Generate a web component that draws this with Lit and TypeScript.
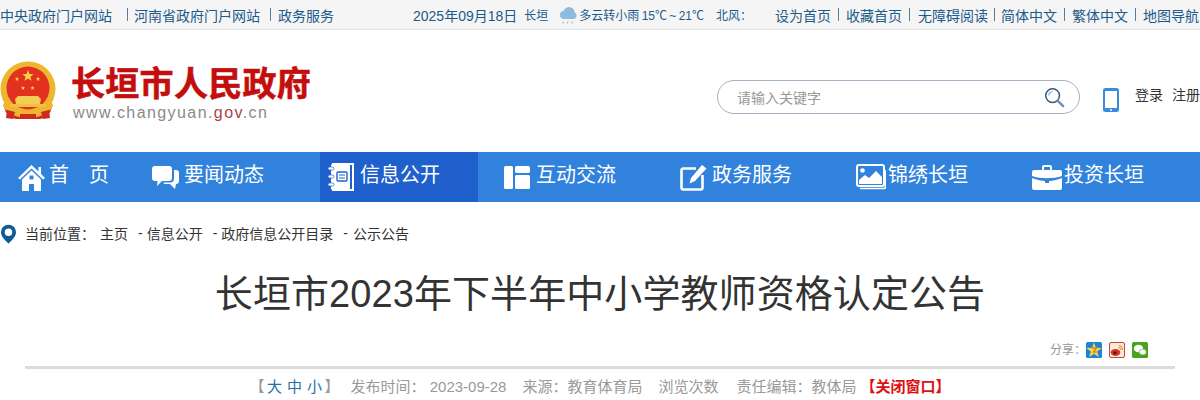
import { LitElement, html, css, svg } from "lit";
import { customElement } from "lit/decorators.js";

const star = (cx: number, cy: number, r: number, fill = "#f7d24a") => {
  const pts: string[] = [];
  for (let i = 0; i < 10; i++) {
    const a = -Math.PI / 2 + (i * Math.PI) / 5;
    const q = i % 2 ? r * 0.42 : r;
    pts.push(`${(cx + q * Math.cos(a)).toFixed(2)},${(cy + q * Math.sin(a)).toFixed(2)}`);
  }
  return svg`<polygon points=${pts.join(" ")} fill=${fill}></polygon>`;
};

@customElement("app-root")
export class AppRoot extends LitElement {
  static styles = css`
    :host {
      display: block;
      width: 1200px;
      height: 400px;
      overflow: hidden;
      background: #fff;
      font-family: "Liberation Sans", "Noto Sans CJK SC", sans-serif;
      color: #333;
    }
    svg { display: block; flex: none; }
    .top {
      height: 29px;
      background: #f5f5f5;
      border-bottom: 1px solid #e2e2e2;
      display: flex;
      align-items: center;
      font-size: 14px;
      color: #1c5a8a;
      white-space: nowrap;
      box-sizing: content-box;
    }
    .top .a { flex: none; }
    .sep { flex: none; width: 1px; height: 13px; background: #4f7fa6; }
    .s1 { margin-left: 15px; }
    .a2 { margin-left: 6px; }
    .s2 { margin-left: 10px; }
    .a3 { margin-left: 7px; }
    .date { margin-left: 79px; }
    .city { margin-left: 7px; font-size: 12px; }
    .cloud { margin-left: 11px; }
    .wx { margin-left: 2px; font-size: 12px; word-spacing: -1px; }
    .wind { margin-left: 12px; font-size: 12px; width: 59px; }
    .r { display: flex; align-items: center; }
    .r .sep { margin: 0 7px; }
    .r .sep.b { margin: 0 8px 0 7px; }
    .r .sep.c { margin: 0 6px; }

    .head { height: 122px; position: relative; display: flex; align-items: flex-start; }
    .logo { display: flex; margin-top: 30px; }
    .names { margin-left: 17px; }
    .cn {
      font-size: 34px;
      line-height: 38px;
      margin-top: 5px;
      margin-left: -2px;
      letter-spacing: 0.3px;
      font-weight: 700;
      color: #c40d0d;
      -webkit-text-stroke: 0.6px #c40d0d;
      white-space: nowrap;
    }
    .en {
      font-size: 16px;
      line-height: 20px;
      letter-spacing: 1.42px;
      color: #8a8a8a;
      white-space: nowrap;
    }
    .en b { font-weight: 400; color: #a8444a; }
    .search {
      position: absolute;
      left: 717px;
      top: 50px;
      width: 328px;
      height: 32px;
      border: 1px solid #a3b3c4;
      border-radius: 17px;
      display: flex;
      align-items: center;
      padding: 0 14px 0 19px;
      justify-content: space-between;
      font-size: 14px;
      color: #999;
      box-sizing: content-box;
    }
    .user {
      position: absolute;
      left: 1103px;
      top: 58px;
      display: flex;
      align-items: flex-start;
      font-size: 14px;
      color: #333;
      white-space: nowrap;
    }
    .user span { line-height: 16px; margin-top: -1px; }
    .user .login { margin-left: 16px; }
    .user .reg { margin-left: 9px; }

    nav {
      height: 50px;
      background: #3182dc;
      display: flex;
      padding-left: 10px;
      color: #fff;
      font-size: 20px;
    }
    .item {
      width: 158px;
      margin-right: 18px;
      padding-left: 8px;
      box-sizing: border-box;
      display: flex;
      align-items: center;
      white-space: nowrap;
      flex: none;
    }
    .item.first { width: 116px; }
    .item.on { background: #2060cc; }
    .item span { display: block; margin-top: -4px; line-height: 28px; }
    .gap4 { margin-left: 4px; }
    .gap5 { margin-left: 5px; }
    .gap6 { margin-left: 6px; }
    .gap2 { margin-left: 2px; }
    .home i { font-style: normal; margin-left: 20px; }

    .crumb {
      height: 64px;
      display: flex;
      align-items: center;
      font-size: 14px;
      color: #333;
      white-space: nowrap;
    }
    .crumb span { margin-top: -2px; }
    .pin { margin: 0 9px 0 1px; }
    .crumb .c1 { margin-left: 5px; }
    .crumb .dash { margin-left: 10px; margin-right: 4px; }
    .crumb .dash.last { margin-right: 5px; }

    h1 {
      margin: 0;
      font-weight: 400;
      font-size: 38px;
      line-height: 56px;
      height: 56px;
      letter-spacing: 0.08px;
      text-align: center;
      color: #333;
      white-space: nowrap;
    }
    .share {
      margin-top: 13px;
      height: 30px;
      padding-right: 52px;
      display: flex;
      justify-content: flex-end;
      align-items: center;
      font-size: 12px;
      color: #999;
    }
    .share span { margin-top: -3px; }
    .share .i { margin-left: 7px; }
    .share .i.first { margin-left: 0; }
    .rule { margin: 1px 25px 0; height: 3px; background: #dcdcdc; }
    .meta {
      display: flex;
      justify-content: center;
      margin-top: 8px;
      font-size: 15px;
      line-height: 20px;
      color: #999;
      white-space: nowrap;
    }
    .meta .blue { color: #2a6ea6; }
    .meta .sz b { font-weight: 400; margin: 0 2.5px; }
    .meta .g { margin-left: 16px; }
    .meta .g1 { margin-left: 11px; }
    .meta .g2 { margin-left: 18px; }
    .meta .close { color: #e01010; margin-left: 4px; font-weight: 700; }
  `;

  emblem() {
    return html`<svg width="56" height="60" viewBox="0 0 56 60">
      <path d="M6 41 C2 48 6 57 16 59 L40 59 C50 57 54 48 50 41 Z" fill="#c92a1c"></path>
      <circle cx="28" cy="29" r="27.5" fill="#eeb630"></circle>
      <circle cx="28" cy="28" r="21.5" fill="#e2321f"></circle>
      ${star(28, 16, 6)}${star(17, 19, 2.4)}${star(38, 19, 2.4)}${star(23, 28, 2.2)}${star(32.5, 28, 2.2)}
      <path d="M18 36 L38 36 L41 39 L40 44 L16 44 L15 39 Z" fill="#f4cd55"></path>
      <rect x="10" y="44" width="36" height="3" fill="#f0c040"></rect>
      <path d="M4 42 C10 52 20 53 28 53 C36 53 46 52 52 42 L53 46 C47 56 36 58 28 58 C20 58 9 56 3 46 Z" fill="#eeb630"></path>
      <path d="M7 50 L15 52 L13 59 L6 58 Z M49 50 L41 52 L43 59 L50 58 Z M20 54 H36 V59 H20 Z" fill="#cf2a1c"></path>
    </svg>`;
  }

  render() {
    return html`
      <div class="top">
        <span class="a">中央政府门户网站</span><i class="sep s1"></i>
        <span class="a a2">河南省政府门户网站</span><i class="sep s2"></i>
        <span class="a a3">政务服务</span>
        <span class="a date">2025年09月18日</span>
        <span class="a city">长垣</span>
        <svg class="cloud" width="18" height="20" viewBox="0 0 18 20">
          <circle cx="5" cy="10" r="4" fill="#8fbbe0"></circle>
          <circle cx="10" cy="7.5" r="5.5" fill="#8fbbe0"></circle>
          <circle cx="14" cy="10.5" r="3.5" fill="#8fbbe0"></circle>
          <rect x="4" y="10" width="11" height="4" fill="#8fbbe0"></rect>
          <path d="M4.5 16.5 l-.7 2 M9 16.5 l-.7 2 M13.5 16.5 l-.7 2" stroke="#9ab" stroke-width="1"></path>
        </svg>
        <span class="a wx">多云转小雨 15℃ ~ 21℃</span>
        <span class="a wind">北风：</span>
        <div class="r">
          <span>设为首页</span><i class="sep"></i>
          <span>收藏首页</span><i class="sep b"></i>
          <span>无障碍阅读</span><i class="sep c"></i>
          <span>简体中文</span><i class="sep"></i>
          <span>繁体中文</span><i class="sep"></i>
          <span>地图导航</span>
        </div>
      </div>

      <div class="head">
        <div class="logo">
          ${this.emblem()}
          <div class="names">
            <div class="cn">长垣市人民政府</div>
            <div class="en">www.changyuan.<b>gov</b>.cn</div>
          </div>
        </div>
        <div class="search">
          <span>请输入关键字</span>
          <svg width="21" height="21" viewBox="0 0 22 22">
            <circle cx="9" cy="9" r="7.2" fill="none" stroke="#3c5a78" stroke-width="1.6"></circle>
            <path d="M5 9 a4 4 0 0 1 4 -4" fill="none" stroke="#7ea6cc" stroke-width="1.2"></path>
            <path d="M14.5 14.5 L20 20" stroke="#6f93b5" stroke-width="2.6" stroke-linecap="round"></path>
          </svg>
        </div>
        <div class="user">
          <svg width="16" height="24" viewBox="0 0 16 24">
            <rect width="16" height="24" rx="2.5" fill="#3a8ae0"></rect>
            <rect x="2" y="3" width="12" height="17" fill="#fff"></rect>
            <circle cx="8" cy="22" r="1" fill="#fff"></circle>
          </svg>
          <span class="login">登录</span><span class="reg">注册</span>
        </div>
      </div>

      <nav>
        <div class="item first">
          <svg width="27" height="27" viewBox="0 0 27 27">
            <path fill="#fff" d="M13.5 1 L0 14 L2 15.5 L13.5 4.5 L25 15.5 L27 14 L23 10 V3 H20.5 V7.5 Z"></path>
            <path fill="#fff" fill-rule="evenodd" d="M13.5 6.5 L4 15.5 V27 H11 V20 H16 V27 H23 V15.5 Z M11.5 11.5 H15.5 V15.5 H11.5 Z"></path>
          </svg>
          <span class="home gap4">首<i>页</i></span>
        </div>
        <div class="item">
          <svg width="27" height="24" viewBox="0 0 27 24">
            <path fill="#fff" d="M3 1 H17 A3 3 0 0 1 20 4 V13 A3 3 0 0 1 17 16 H10 L5 21 L5.5 16 H3 A3 3 0 0 1 0 13 V4 A3 3 0 0 1 3 1 Z"></path>
            <path fill="#fff" d="M22 5 H24 A3 3 0 0 1 27 8 V16 A3 3 0 0 1 24 19 L23 24 L18 19 H12 L11.5 17.5 H18 A4 4 0 0 0 22 13.5 Z"></path>
          </svg>
          <span class="gap5">要闻动态</span>
        </div>
        <div class="item on">
          <svg width="26" height="28" viewBox="0 0 26 28">
            <path fill="#fff" fill-rule="evenodd" d="M4 0 H26 V28 H4 V24 H6 V26 H24 V2 H6 V4 H4 Z"></path>
            <rect x="3" y="1.5" width="19" height="25" fill="#fff"></rect>
            <rect x="9" y="9" width="10" height="9" rx="1" fill="none" stroke="#2060cc" stroke-width="1.4"></rect>
            <path d="M11 12 H17 M11 15 H17" stroke="#2060cc" stroke-width="1.2"></path>
            <rect x="0" y="4" width="6" height="3" rx="1.5" fill="#fff" stroke="#2060cc" stroke-width=".7"></rect>
            <rect x="0" y="12" width="6" height="3" rx="1.5" fill="#fff" stroke="#2060cc" stroke-width=".7"></rect>
            <rect x="0" y="20" width="6" height="3" rx="1.5" fill="#fff" stroke="#2060cc" stroke-width=".7"></rect>
          </svg>
          <span class="gap6">信息公开</span>
        </div>
        <div class="item">
          <svg width="26" height="23" viewBox="0 0 26 23">
            <rect width="9" height="23" rx="1.5" fill="#fff"></rect>
            <rect x="11" width="15" height="7" rx="1.5" fill="#fff"></rect>
            <rect x="11" y="9" width="15" height="14" rx="1.5" fill="#fff"></rect>
          </svg>
          <span class="gap6">互动交流</span>
        </div>
        <div class="item">
          <svg width="27" height="27" viewBox="0 0 27 27">
            <path fill="none" stroke="#fff" stroke-width="2.6" d="M16 4.5 H3.5 A2 2 0 0 0 1.5 6.5 V23.5 A2 2 0 0 0 3.5 25.5 H20.5 A2 2 0 0 0 22.5 23.5 V11"></path>
            <path fill="#fff" d="M22 1 L26.5 4.5 L15 17 L9.5 19.5 L11 14 Z"></path>
          </svg>
          <span class="gap5">政务服务</span>
        </div>
        <div class="item">
          <svg width="30" height="26" viewBox="0 0 30 26">
            <rect x="1" y="1" width="27" height="21" rx="2" fill="none" stroke="#fff" stroke-width="2"></rect>
            <path d="M4 24.5 H28 A1.5 1.5 0 0 0 29.5 23 V6" fill="none" stroke="#fff" stroke-width="1.6"></path>
            <circle cx="6.5" cy="6.5" r="2.3" fill="#fff"></circle>
            <path fill="#fff" d="M3 20 V16 L9 11 L13 14 L20 7 L26 13 V20 Z"></path>
          </svg>
          <span class="gap2">锦绣长垣</span>
        </div>
        <div class="item">
          <svg width="30" height="25" viewBox="0 0 30 25">
            <path fill="#fff" fill-rule="evenodd" d="M10 5 V2 A2 2 0 0 1 12 0 H18 A2 2 0 0 1 20 2 V5 H18 V2 H12 V5 Z"></path>
            <path fill="#fff" d="M2 5 H28 A2 2 0 0 1 30 7 V11 C22 14 8 14 0 11 V7 A2 2 0 0 1 2 5 Z"></path>
            <path fill="#fff" d="M0 13 C5 15 10 16 13 16 V18 H17 V16 C20 16 25 15 30 13 V23 A2 2 0 0 1 28 25 H2 A2 2 0 0 1 0 23 Z"></path>
          </svg>
          <span class="gap2">投资长垣</span>
        </div>
      </nav>

      <div class="crumb">
        <svg class="pin" width="15" height="20" viewBox="0 0 16 20">
          <path fill="#0f5c94" fill-rule="evenodd" d="M8 0 A8 8 0 0 1 16 8 C16 13 11 17 8 20 C5 17 0 13 0 8 A8 8 0 0 1 8 0 Z M8 4 A4 4 0 1 0 8 12 A4 4 0 1 0 8 4 Z"></path>
        </svg>
        <span>当前位置：</span>
        <span class="c1">主页</span>
        <span class="dash">-</span><span>信息公开</span>
        <span class="dash">-</span><span>政府信息公开目录</span>
        <span class="dash last">-</span><span>公示公告</span>
      </div>

      <h1>长垣市2023年下半年中小学教师资格认定公告</h1>

      <div class="share">
        <span>分享：</span>
        <svg class="i first" width="16" height="16" viewBox="0 0 16 16">
          <rect width="16" height="16" rx="1.5" fill="#1f84d6"></rect>
          ${star(8, 8.5, 8, "#f8d552")}
          <path d="M5.8 6 H10.4 L7.5 10 H10.6" fill="none" stroke="#d98a10" stroke-width="1.5"></path>
        </svg>
        <svg class="i" width="16" height="16" viewBox="0 0 16 16">
          <rect x=".5" y=".5" width="15" height="15" rx="1.5" fill="#fbe9dc" stroke="#c8482f"></rect>
          <ellipse cx="6.5" cy="10.5" rx="4.8" ry="3.4" fill="#d8322a"></ellipse>
          <circle cx="6" cy="10.8" r="1.5" fill="#222"></circle>
          <path d="M9.5 3.5 A4 4 0 0 1 13.5 8 M9.5 5.5 A2 2 0 0 1 11.5 8" fill="none" stroke="#ee8a20" stroke-width="1.1"></path>
        </svg>
        <svg class="i" width="16" height="16" viewBox="0 0 16 16">
          <rect width="16" height="16" rx="1.5" fill="#4aa31e"></rect>
          <ellipse cx="6.5" cy="6.5" rx="4.6" ry="3.8" fill="#fff"></ellipse>
          <ellipse cx="10.8" cy="10" rx="3.6" ry="3" fill="#fff" stroke="#4aa31e" stroke-width=".6"></ellipse>
        </svg>
      </div>
      <div class="rule"></div>
      <div class="meta">
        <span>【<span class="blue sz"><b>大</b><b>中</b><b>小</b></span>】</span>
        <span class="g1">发布时间： 2023-09-28</span>
        <span class="g">来源：教育体育局</span>
        <span class="g">浏览次数</span>
        <span class="g2">责任编辑：教体局</span>
        <span class="close">【关闭窗口】</span>
      </div>
    `;
  }
}
